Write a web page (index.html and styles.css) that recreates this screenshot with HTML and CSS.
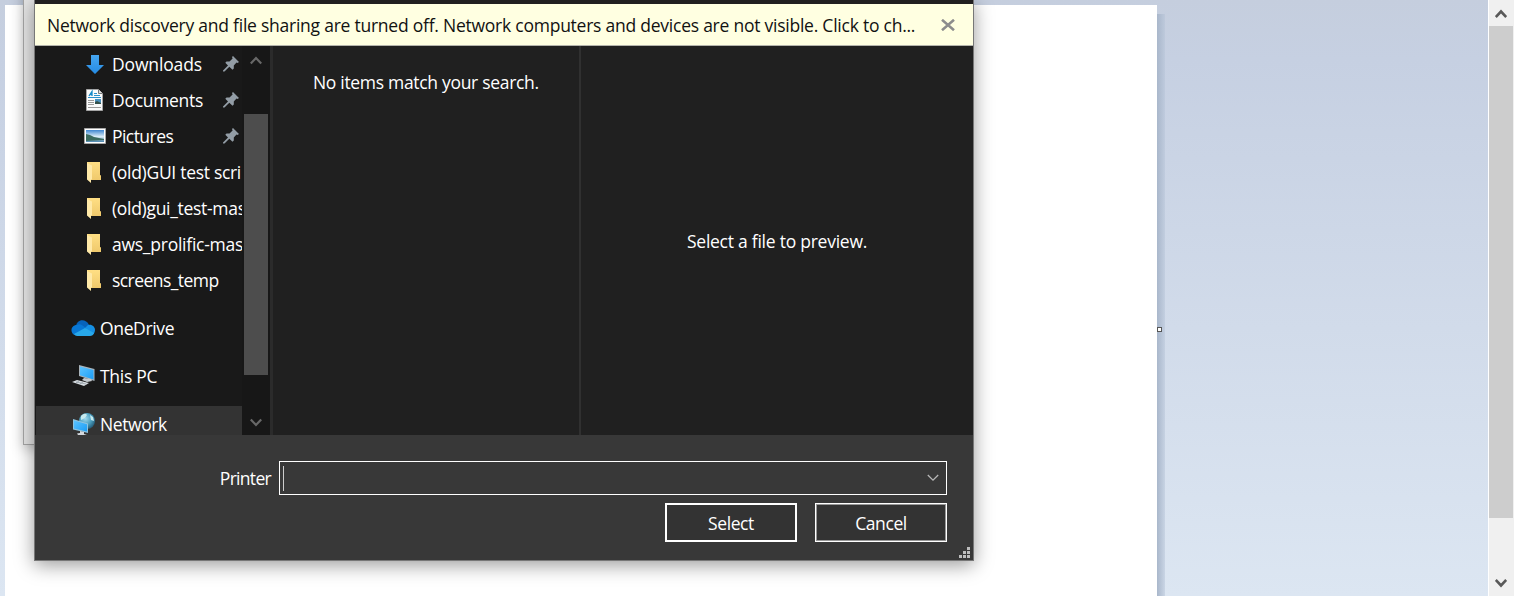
FILE: index.html
```
<!DOCTYPE html>
<html lang="en">
<head>
<meta charset="utf-8">
<title>Select printer</title>
<link rel="stylesheet" href="styles.css">
</head>
<body>
<svg class="defs" width="0" height="0" aria-hidden="true">
  <defs>
    <linearGradient id="gold" x1="0" y1="0" x2="0" y2="1"><stop offset="0" stop-color="#ffdf84"/><stop offset="1" stop-color="#efc96c"/></linearGradient>
    <linearGradient id="screen" x1="0" y1="0" x2="1" y2="1"><stop offset="0" stop-color="#5cc3ff"/><stop offset="1" stop-color="#1b9df5"/></linearGradient>
    <linearGradient id="arrow" x1="0" y1="0" x2="0" y2="1"><stop offset="0" stop-color="#46a6f0"/><stop offset="1" stop-color="#258be3"/></linearGradient>
    <linearGradient id="sky" x1="0" y1="0" x2="0" y2="1"><stop offset="0" stop-color="#3e86d0"/><stop offset=".55" stop-color="#dcedf8"/><stop offset="1" stop-color="#4c86ae"/></linearGradient>
    <radialGradient id="globe" cx=".4" cy=".35" r=".65"><stop offset="0" stop-color="#9cd8ee"/><stop offset=".6" stop-color="#4a9dbd"/><stop offset="1" stop-color="#27617f"/></radialGradient>
    <symbol id="pin" viewBox="0 0 16 16"><path d="M10 0 16 6 14.500 7 13.500 6.500 10.800 9.500V12.500L9.500 13.800 6.300 10.700 1.500 15.500H0V14.500L5 9.500 2.300 6.800 3.500 5.500H6.500L9.600 2.500 9 1Z" fill="#939da6"/></symbol>
    <symbol id="folder" viewBox="0 0 14 21"><path d="M0 0H13V13L14 13.500V18H4L0 17Z" fill="url(#gold)"/><path d="M0 1 5 3.500V17L4 18V21L0 17.500Z" fill="#ffe9a8"/></symbol>
  </defs>
</svg>
<main class="desktop">
  <section class="workspace">
    <div class="paper"></div>
    <div class="paper-shadow"></div>
    <i class="handle"></i>
  </section>
  <aside class="page-scroll">
    <svg width="12" height="10" viewBox="0 0 12 10"><path d="M.8 8 6 2.500 11.200 8" fill="none" stroke="#595959" stroke-width="2.600"/></svg>
    <div class="page-thumb"></div>
    <svg class="page-down" width="12" height="10" viewBox="0 0 12 10"><path d="M.8 2 6 7.500 11.200 2" fill="none" stroke="#595959" stroke-width="2.600"/></svg>
  </aside>

  <div class="back-window"></div>

  <section class="dialog">
    <div class="dialog-strip"></div>
    <header class="notice">
      <span class="notice-text">Network discovery and file sharing are turned off. Network computers and devices are not visible. Click to ch...</span>
      <svg class="notice-close" width="14" height="12" viewBox="0 0 14 12"><path d="M1 .8 13 11.200M13 .8 1 11.200" stroke="#8c8c8c" stroke-width="2.600"/></svg>
    </header>
    <div class="panes">
      <nav class="tree">
        <div class="row sub"><span class="icon"><svg width="18" height="19" viewBox="0 0 18 19"><path d="M5 0H13V10H18L9 19 0 10H5Z" fill="url(#arrow)"/></svg></span><span class="label downloads">Downloads</span><svg class="pin" width="16" height="16"><use href="#pin"/></svg></div>
        <div class="row sub"><span class="icon narrow"><svg width="17" height="22" viewBox="0 0 17 22"><path d="M.5.5H12.500L16.500 4.500V21.500H.5Z" fill="#fafafa" stroke="#a5a5a5"/><path d="M12.500.5V4.500H16.500" fill="#ddd" stroke="#777"/><path d="M3 7 6 2.500V7M4 5.500H6" fill="none" stroke="#168ac8" stroke-width="1.300"/><path d="M8 4.500H11M8 6.500H14M2 8.500H15" stroke="#288fcb"/><path d="M2 11.500H8M2 13.500H8M2 15.500H8M2 18.500H15" stroke="#999"/><path d="M9 10H15V15H9Z" fill="#4990bd"/><path d="M9 13 11 12 15 14V15H9Z" fill="#35504a"/></svg></span><span class="label documents">Documents</span><svg class="pin" width="16" height="16"><use href="#pin"/></svg></div>
        <div class="row sub"><span class="icon"><svg width="22" height="16" viewBox="0 0 22 16"><path d="M.5.5H21.500V15.500H.5Z" fill="#fff" stroke="#a8a8a8"/><path d="M2 2H20V14H2Z" fill="url(#sky)"/><path d="M2 6 6 7 10 9 20 11V12L2 13Z" fill="#3b6b5f"/></svg></span><span class="label pictures">Pictures</span><svg class="pin" width="16" height="16"><use href="#pin"/></svg></div>
        <div class="row sub"><span class="icon narrow"><svg width="14" height="21"><use href="#folder"/></svg></span><span class="label gui">(old)GUI test scri</span></div>
        <div class="row sub"><span class="icon narrow"><svg width="14" height="21"><use href="#folder"/></svg></span><span class="label master">(old)gui_test-mas</span></div>
        <div class="row sub"><span class="icon narrow"><svg width="14" height="21"><use href="#folder"/></svg></span><span class="label aws">aws_prolific-mas</span></div>
        <div class="row sub"><span class="icon narrow"><svg width="14" height="21"><use href="#folder"/></svg></span><span class="label temp">screens_temp</span></div>
        <div class="row root"><span class="icon"><svg width="24" height="16" viewBox="0 0 24 16"><path d="M5 7C5-1 15-2 18 5L14 11 5 9Z" fill="#0763bb"/><path d="M4 15C-1 14-1 5 6 5 9 3 12 6 15 8L8 15Z" fill="#0877d4"/><path d="M14 8 17 5C21 4 24 7 24 10 24 13 22 15 20 15Z" fill="#1590e4"/><path d="M3 14 14 8 23 13Q22 16 19 16H6Q4 16 3 14Z" fill="#28a8ea"/></svg></span><span class="label onedrive">OneDrive</span></div>
        <div class="row root"><span class="icon"><svg width="24" height="22" viewBox="0 0 24 22"><path d="M8 0 23.500 4V16L8 11Z" fill="#a9b4bb"/><path d="M9 1.500 22.500 5V14.500L9 10.300Z" fill="url(#screen)"/><path d="M13 13 20 14 21 16 16 17 11 15Z" fill="#c3c9ce"/><path d="M6 15 18 18 13 21 1 17Z" fill="#d8dde2"/><path d="M5 17 15 19M8 16 5 18M12 17 9 19" stroke="#8d969e" stroke-width=".7"/></svg></span><span class="label pc">This PC</span></div>
        <div class="row root selected"><span class="icon wide"><svg width="22" height="22" viewBox="0 0 22 22"><circle cx="14" cy="8" r="8" fill="url(#globe)"/><path d="M8 3Q12-1 14 2L12 5 8 7ZM17 2 20 4 21 8 18 7Z" fill="#c6e9ee"/><path d="M0 6 15 10.500V20L0 16.500Z" fill="#8fc4df"/><path d="M1 7.500 14 11.300V18.500L1 15.500Z" fill="url(#screen)"/><path d="M7 18 11 19V21L14 22H5L4 20.500 7 20Z" fill="#d4d8dd"/></svg></span><span class="label network">Network</span></div>
      </nav>
      <div class="tree-scroll">
        <svg width="12" height="9" viewBox="0 0 12 9"><path d="M.8 7.500 6 2 11.200 7.500" fill="none" stroke="#686868" stroke-width="2.200"/></svg>
        <div class="tree-thumb"></div>
        <svg class="tree-down" width="12" height="9" viewBox="0 0 12 9"><path d="M.8 1.500 6 7 11.200 1.500" fill="none" stroke="#686868" stroke-width="2.200"/></svg>
      </div>
      <div class="files"><span class="empty-text">No items match your search.</span></div>
      <div class="preview"><span class="preview-text">Select a file to preview.</span></div>
    </div>
    <footer class="actions">
      <div class="field-row">
        <span class="field-label">Printer</span>
        <div class="combo"><i class="caret"></i><svg width="12" height="8" viewBox="0 0 12 8"><path d="M.8 1 6 6.200 11.200 1" fill="none" stroke="#b8b8b8" stroke-width="1.300"/></svg></div>
      </div>
      <div class="buttons">
        <div class="button primary"><span class="select">Select</span></div>
        <div class="button"><span class="cancel">Cancel</span></div>
      </div>
      <svg class="grip" width="11" height="11" viewBox="0 0 11 11"><path d="M8 0h3v3H8zM4 4h3v3H4zM8 4h3v3H8zM0 8h3v3H0zM4 8h3v3H4zM8 8h3v3H8z" fill="#bdbdbd"/></svg>
    </footer>
  </section>
</main>
</body>
</html>
```
FILE: styles.css
```
* { box-sizing: border-box; }
body { margin: 0; overflow: hidden; font-family: "Open Sans", "Noto Sans", sans-serif; font-size: 17.5px; color: #fff; }
svg { display: block; flex: none; }
.defs { position: absolute; }
.desktop { position: relative; display: flex; width: 1514px; height: 596px; overflow: hidden; }
.workspace { position: relative; display: flex; width: 1488px; padding: 5px 0 0 5px; background: linear-gradient(#c5cede, #c6d0e2 10%, #dce6f2); }
.paper { width: 1152px; background: #fff; }
.paper-shadow { width: 8px; margin-top: 9px; background: linear-gradient(90deg, #a9b7cb, rgba(180,194,214,.45)); }
.handle { position: absolute; left: 1157px; top: 327px; width: 5px; height: 5px; border: 1px solid #555; background: #fff; }
.page-scroll { display: flex; flex-direction: column; align-items: center; width: 26px; padding: 9px 1px 8px 0; border-left: 1px solid #fff; background: #f0f0f0; }
.page-thumb { width: 24px; height: 492px; margin-top: 7px; background: #cdcdcd; }
.page-down { margin-top: auto; }
.back-window { position: absolute; left: 23px; top: -20px; width: 500px; height: 465px; border: 1px solid #a5a5a5; background: #e5e5e5; box-shadow: 0 4px 12px rgba(0,0,0,.25); }
.dialog { position: absolute; left: 34px; top: -1px; width: 940px; height: 562px; display: flex; flex-direction: column; border: 1px solid #777; background: #383838; box-shadow: 0 4px 18px rgba(0,0,0,.4); }
.dialog-strip { height: 4px; flex: none; background: #211f20; }
.notice { display: flex; align-items: center; justify-content: space-between; height: 42px; flex: none; padding: 0 18px 0 12px; background: #ffffe1; border-bottom: 1px solid #b4b4ac; color: #111; }
.notice-text { white-space: nowrap; letter-spacing: -.24px; }
.panes { display: flex; height: 389px; flex: none; overflow: hidden; background: #202020; }
.tree { width: 207px; overflow: hidden; background: #191919; }
.row { display: flex; align-items: center; height: 36px; white-space: nowrap; line-height: 24px; }
.row.sub { padding-left: 48px; }
.row.root { margin-top: 12px; padding-left: 36px; }
.row .icon { display: flex; width: 24px; justify-content: center; margin-right: 5px; flex: none; }
.row .icon.narrow { padding-right: 2px; }
.row .icon.wide { padding-left: 2px; }
.row.selected { margin-left: 1px; padding-left: 35px; background: #333; }
.downloads { letter-spacing: -.15px; }
.documents { letter-spacing: -.3px; }
.pictures { letter-spacing: -.55px; }
.gui { letter-spacing: -.3px; }
.master { letter-spacing: -.3px; }
.aws { letter-spacing: -.25px; }
.temp { letter-spacing: -.55px; }
.onedrive { letter-spacing: -.35px; }
.pc { letter-spacing: -.3px; }
.network { letter-spacing: -.4px; }
.pin { margin-left: auto; margin-right: 3px; }
.tree-scroll { display: flex; flex-direction: column; align-items: center; width: 28px; padding: 10px 0 8px; background: #171717; }
.tree-thumb { width: 24px; height: 261px; margin-top: 49px; background: #4d4d4d; }
.tree-down { margin-top: auto; }
.files { width: 311px; padding: 24px 0 0 40px; border-left: 3px solid #2b2b2b; border-right: 2px solid #303030; line-height: 24px; white-space: nowrap; }
.empty-text { letter-spacing: -.31px; }
.preview { flex: 1; display: flex; align-items: center; justify-content: center; white-space: nowrap; }
.preview-text { letter-spacing: -.25px; }
.actions { position: relative; flex: 1; padding: 26px 26px 0 0; }
.field-row { display: flex; align-items: center; justify-content: flex-end; gap: 8px; height: 34px; }
.field-label { letter-spacing: -.7px; }
.combo { display: flex; align-items: center; justify-content: space-between; width: 668px; height: 34px; padding: 0 7px 0 3px; border: 1px solid #fff; }
.caret { width: 1px; height: 25px; background: #ccc; }
.buttons { display: flex; justify-content: flex-end; gap: 18px; margin-top: 8px; }
.button { display: flex; align-items: center; justify-content: center; width: 132px; height: 39px; border: 1px solid #fff; box-shadow: inset 0 0 0 1px #999; background: #333; letter-spacing: -.4px; }
.button.primary { border-width: 2px; box-shadow: none; }
.grip { position: absolute; right: 3px; bottom: 2px; }
```
